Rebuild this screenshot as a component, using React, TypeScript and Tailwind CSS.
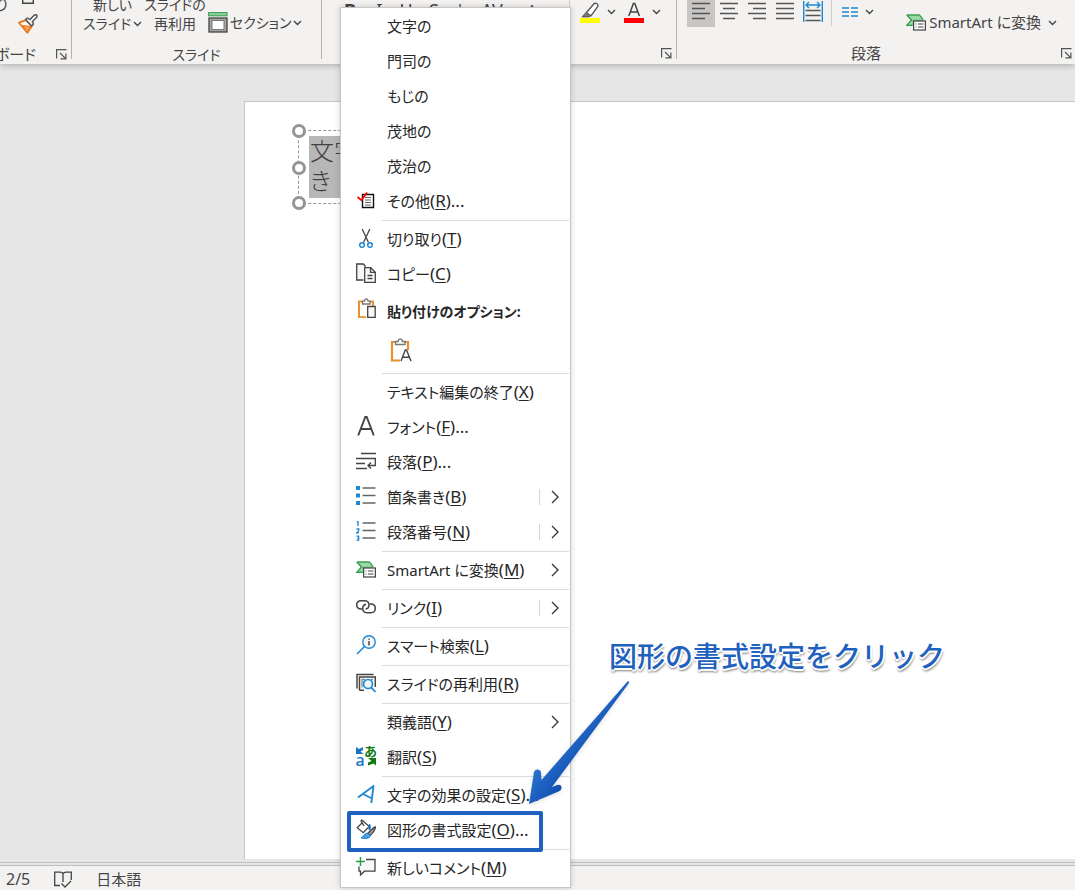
import React from 'react';

type IconProps = { className?: string };

function Chevron({ className = '' }: IconProps) {
  return (
    <svg viewBox="0 0 9 6" className={`h-[6px] w-[9px] shrink-0 ${className}`} fill="none" stroke="#444" strokeWidth="1.4">
      <path d="M1 1l3.5 3.5L8 1" />
    </svg>
  );
}

function Launcher() {
  return (
    <button aria-label="ダイアログを開く" className="shrink-0">
      <svg viewBox="0 0 11 11" className="h-[11px] w-[11px]" fill="none" stroke="#555" strokeWidth="1.2">
        <path d="M.6 9.5V.6h9.9M4 4l5 5M9.9 4.5v5.4H4.5" />
      </svg>
    </button>
  );
}

function SmartArtIcon() {
  return (
    <svg viewBox="0 0 20 17" className="h-[17px] w-5" fill="none">
      <path d="M.8 1h12.6l3.6 4.3v1H7.3v5H.8l4.8-5.2z" fill="#9fd8a8" stroke="#2e9e4a" strokeWidth=".8" />
      <path d="M.8 1h12.6L17 5.3M.8 1l4.8 5L.8 11.3h5.5" stroke="#2e9e4a" strokeWidth="1.2" />
      <rect x="7.6" y="7" width="11.8" height="9" fill="#fff" stroke="#444" strokeWidth="1.2" />
      <path d="M9.5 10h1M12 10h5.5M9.5 13h1M12 13h5.5" stroke="#444" />
    </svg>
  );
}

function BrushIcon() {
  return (
    <svg viewBox="0 0 20 20" className="h-5 w-5" fill="none">
      <path d="M1 8.7l7-2.6 5.8 6.1-4.500 6.600z" fill="#fff" stroke="#e8791a" strokeWidth="1.8" strokeLinejoin="round" />
      <path d="M4.500 11.500l8.500 1-3.600 5.800z" fill="#f4a05a" stroke="#e8791a" />
      <path d="M7.500 5.600l2-1.600 2.300 1.600L16.500 1c1.600-1 3.200.6 2.200 2.200l-4.400 4.600 1.200 2.200-1.800 2z" fill="#fff" stroke="#555" strokeWidth="1.500" strokeLinejoin="round" />
    </svg>
  );
}

function SectionIcon() {
  return (
    <svg viewBox="0 0 20 21" className="h-[21px] w-5 shrink-0" fill="none">
      <rect x=".6" y=".6" width="18.4" height="3.2" fill="#8fd19d" stroke="#2e9e4a" />
      <rect x="1" y="6" width="18" height="14" fill="#a6a6a6" stroke="#444" strokeWidth="1.3" />
      <rect x="4" y="8.5" width="12" height="9" fill="#fff" stroke="#777" />
    </svg>
  );
}

function HighlightIcon() {
  return (
    <svg viewBox="0 0 20 21" className="h-[21px] w-5" fill="none">
      <path d="M6.5 10.5L14 1.8c1.4-1.6 5 .6 3.6 2.8l-6.400 9-4.700-.6z" fill="#fff" stroke="#555" strokeWidth="1.4" />
      <path d="M6.2 10.3l5 3.4-2.6 1.2H2z" fill="#777" stroke="#555" />
      <rect y="16" width="20" height="5" fill="#ff0" />
    </svg>
  );
}

function FontColorIcon() {
  return (
    <svg viewBox="0 0 20 21" className="h-[21px] w-5" fill="none">
      <path d="M4.8 14L9.4 1.6h1.4L15.4 14M6.3 10h7.6" stroke="#444" strokeWidth="1.500" />
      <rect y="16" width="20" height="5" fill="#f00" />
    </svg>
  );
}

function AlignIcon({ d }: { d: string }) {
  return (
    <svg viewBox="0 0 18 18" className="h-[18px] w-[18px]" stroke="#555" strokeWidth="1.5">
      <path d={d} />
    </svg>
  );
}

const alignments = [
  { label: '左揃え', d: 'M0 1.5h18M0 6.5h13M0 11.5h18M0 16.5h13', active: true },
  { label: '中央揃え', d: 'M0 1.5h18M3 6.5h12M0 11.5h18M3 16.5h12', active: false },
  { label: '右揃え', d: 'M0 1.5h18M5 6.5h13M0 11.5h18M5 16.5h13', active: false },
  { label: '両端揃え', d: 'M0 1.5h18M0 6.5h18M0 11.5h18M0 16.5h18', active: false },
];

function MenuSvg({ children }: { children: React.ReactNode }) {
  return (
    <svg viewBox="0 0 20 20" className="h-5 w-5" fill="none" stroke="#444" strokeWidth="1.3">
      {children}
    </svg>
  );
}

const icons = {
  other: (
    <MenuSvg>
      <path d="M6.500 4.500h11v13h-11z" fill="#fff" stroke="#111" strokeWidth="1.400" />
      <path d="M9 7.500h6M9 10h6M9 12.500h6M9 15h6" stroke="#666" strokeWidth="1" />
      <path d="M1.500 7l4 3.200L11 2.500" stroke="#f00" strokeWidth="1.800" />
    </MenuSvg>
  ),
  cut: (
    <MenuSvg>
      <path d="M6.200 1l6.300 13.500M13.800 1L7.500 14.500" />
      <circle cx="6" cy="17" r="2.300" stroke="#1e88d2" strokeWidth="1.500" />
      <circle cx="14" cy="17" r="2.300" stroke="#1e88d2" strokeWidth="1.500" />
    </MenuSvg>
  ),
  copy: (
    <MenuSvg>
      <path d="M7.500 17H.7V1h6.500l2.500 2.500" fill="#f5f6f8" />
      <path d="M8.700 4.700h6l4.600 4.500v10.100H8.700z" fill="#f8f8f8" />
      <path d="M14.500 4.700v4.700h4.800M11.500 12.500h5M11.500 15.500h5" />
    </MenuSvg>
  ),
  paste: (
    <MenuSvg>
      <path d="M6.500 3.500H3v15.700h7M14 3.500h3V8" stroke="#e8912d" strokeWidth="2" />
      <path d="M6.500 6V3.200h2c0-3 3.500-3 3.500 0h2V6z" fill="#fff" stroke="#777" />
      <path d="M11.700 8.500h7.500v10.800h-7.500z" fill="#f8f8f8" />
    </MenuSvg>
  ),
  font: (
    <MenuSvg>
      <path d="M2.200 19.500L9.300 1h1.400l7.100 18.500M4.600 13h10.800" strokeWidth="1.900" />
    </MenuSvg>
  ),
  paragraph: (
    <MenuSvg>
      <path d="M5 2.500h15M0 7.500h20M0 12.500h9M0 17.500h11M19.300 8v6.500h-7M15 11.500l-3 3 3 3" strokeWidth="1.300" />
    </MenuSvg>
  ),
  bullets: (
    <MenuSvg>
      <path d="M0 0h4v4H0zM0 7.500h4v4H0zM0 15h4v4H0z" fill="#1e88d2" stroke="none" />
      <path d="M6.500 2h13M6.500 9.500h13M6.500 17h13" stroke="#666" strokeWidth="1.500" />
    </MenuSvg>
  ),
  numbers: (
    <MenuSvg>
      <path d="M.8 1.200L2 .5V5M.5 8h2.300v1.600L.6 11.800H3M.5 15.200h2.200v1.900H1.200h1.500v2H.5" stroke="#1e88d2" strokeWidth="1.300" />
      <path d="M6.500 2h13M6.500 9.500h13M6.500 17h13" stroke="#666" strokeWidth="1.500" />
    </MenuSvg>
  ),
  smartArt: <SmartArtIcon />,
  link: (
    <MenuSvg>
      <path d="M6 12H5C-.7 11.500-.7 4 5 3.700h3.500c5.800 0 5.800 7.600 1 8.300" strokeWidth="1.500" />
      <path d="M13.500 7h1.500c5.700.3 5.700 8.500 0 8.800h-4c-5.500-.3-5.500-7.500-1-8.500" strokeWidth="1.500" />
    </MenuSvg>
  ),
  search: (
    <MenuSvg>
      <circle cx="13" cy="7" r="6.200" fill="#f6f8fa" stroke="#1e88d2" strokeWidth="1.400" />
      <path d="M8.500 11.500L1 19" stroke="#1e88d2" strokeWidth="1.600" />
      <path d="M13 6v4.500M13 3.500v1.300" strokeWidth="1.500" />
    </MenuSvg>
  ),
  reuse: (
    <MenuSvg>
      <path d="M1 15.500V1.500h16.500M3.500 17.500V4h15.800v10M3.500 17.300H8" strokeWidth="1.500" />
      <path d="M6 14.500V6.500h3M15 6.500h2" stroke="#888" />
      <circle cx="12" cy="11" r="4.500" fill="#eef6fc" stroke="#1e88d2" strokeWidth="1.700" />
      <path d="M15 14.300l4.500 4.700" stroke="#1e88d2" strokeWidth="1.800" />
    </MenuSvg>
  ),
  translate: (
    <svg viewBox="0 0 20 20" className="h-5 w-5 overflow-visible" fontFamily="'Noto Sans','Noto Sans CJK JP',sans-serif" fontWeight="700">
      <text x="-.5" y="19.500" fontSize="16" fontWeight="500" fill="#1673c8">a</text>
      <text x="8" y="10" fontSize="13" fill="#107c10">あ</text>
      <path d="M0 1l3 2 4-2v3L4.500 5.500 7.500 8H0z" fill="#1673c8" />
      <path d="M12 12h8v7.500l-2.500-2-5.500 2v-3l3.500-1.500z" fill="#107c10" />
    </svg>
  ),
  textEffect: (
    <MenuSvg>
      <path d="M2 13.500L17.500 2 15.300 19M7 10l9 4.500" stroke="#1e88d2" strokeWidth="1.900" strokeLinejoin="round" />
    </MenuSvg>
  ),
  shapeFormat: (
    <MenuSvg>
      <path d="M6 4L1.200 8.700l6 5 6-6.200L6.500 1.500C5 .5 4.500 2 6 3.500l2 3.500" fill="#fff" />
      <path d="M19.500 8c-2 .5-6 4-7.500 6.500l2 2c2.500-2 5-5.500 5.500-8.500z" fill="#999" />
      <path d="M11.800 14l2.700 2.700c-1 3-5 3-9.500 2.300 2.500-.5 3-5 6.800-5z" fill="#4ba3e3" stroke="#1673c8" strokeWidth="1" />
      <path d="M13 5.500c1.500 1 1 3 .3 5.500" stroke="#1673c8" strokeWidth="2" />
    </MenuSvg>
  ),
  comment: (
    <MenuSvg>
      <path d="M10 2.500h9v11.700H8.500L4.500 18v-3.800H3V9.500" fill="#f8f8f8" />
      <path d="M4.500 0v9M0 4.500h9" stroke="#22a045" strokeWidth="1.500" />
    </MenuSvg>
  ),
};

type Entry =
  | { kind: 'item'; text: string; keyChar?: string; tail?: string; icon?: keyof typeof icons; sub?: boolean; split?: boolean; marked?: boolean }
  | { kind: 'separator' }
  | { kind: 'paste' };

const entries: Entry[] = [
  { kind: 'item', text: '文字の' },
  { kind: 'item', text: '門司の' },
  { kind: 'item', text: 'もじの' },
  { kind: 'item', text: '茂地の' },
  { kind: 'item', text: '茂治の' },
  { kind: 'item', text: 'その他', keyChar: 'R', tail: '...', icon: 'other' },
  { kind: 'separator' },
  { kind: 'item', text: '切り取り', keyChar: 'T', icon: 'cut' },
  { kind: 'item', text: 'コピー', keyChar: 'C', icon: 'copy' },
  { kind: 'paste' },
  { kind: 'separator' },
  { kind: 'item', text: 'テキスト編集の終了', keyChar: 'X' },
  { kind: 'item', text: 'フォント', keyChar: 'F', tail: '...', icon: 'font' },
  { kind: 'item', text: '段落', keyChar: 'P', tail: '...', icon: 'paragraph' },
  { kind: 'item', text: '箇条書き', keyChar: 'B', icon: 'bullets', sub: true, split: true },
  { kind: 'item', text: '段落番号', keyChar: 'N', icon: 'numbers', sub: true, split: true },
  { kind: 'separator' },
  { kind: 'item', text: 'SmartArt に変換', keyChar: 'M', icon: 'smartArt', sub: true },
  { kind: 'separator' },
  { kind: 'item', text: 'リンク', keyChar: 'I', icon: 'link', sub: true, split: true },
  { kind: 'separator' },
  { kind: 'item', text: 'スマート検索', keyChar: 'L', icon: 'search' },
  { kind: 'separator' },
  { kind: 'item', text: 'スライドの再利用', keyChar: 'R', icon: 'reuse' },
  { kind: 'separator' },
  { kind: 'item', text: '類義語', keyChar: 'Y', sub: true },
  { kind: 'item', text: '翻訳', keyChar: 'S', icon: 'translate' },
  { kind: 'separator' },
  { kind: 'item', text: '文字の効果の設定', keyChar: 'S', tail: '...', icon: 'textEffect' },
  { kind: 'item', text: '図形の書式設定', keyChar: 'O', tail: '...', icon: 'shapeFormat', marked: true },
  { kind: 'separator' },
  { kind: 'item', text: '新しいコメント', keyChar: 'M', icon: 'comment' },
];

function PasteOptions() {
  return (
    <div>
      <div className="flex h-10 items-center gap-[11px] pl-[15px] text-sm leading-5 font-bold">
        <span className="w-5 shrink-0 pb-2">{icons.paste}</span>
        <span>貼り付けのオプション:</span>
      </div>
      <div className="flex h-10 items-center pb-1 pl-[48px]">
        <button role="menuitem" aria-label="テキストのみ保持">
          <svg viewBox="0 0 24 26" className="h-[26px] w-6" fill="none">
            <path d="M6.500 5H3v18.500h8M15 5h4v8" stroke="#e8912d" strokeWidth="2.200" />
            <path d="M6.500 7.500V4.500h2.800c0-3.500 4-3.500 4 0h2.700v3z" fill="#fff" stroke="#777" strokeWidth="1.300" />
            <path d="M12 24l4.300-11h1.200L22 24M13.300 20.300h7.300" stroke="#444" strokeWidth="1.400" />
          </svg>
        </button>
      </div>
    </div>
  );
}

function ContextMenu() {
  return (
    <div
      role="menu"
      className="absolute left-[340px] top-[7px] w-[231px] border border-[#c6c6c6] bg-white py-px text-[15px] leading-5 text-[#262626] shadow-[0_0_6px_rgba(0,0,0,0.18)]"
    >
      {entries.map((e, i) => {
        if (e.kind === 'separator') return <div key={i} role="separator" className="my-px ml-[41px] mr-px h-px bg-[#dcdcdc]" />;
        if (e.kind === 'paste') return <PasteOptions key={i} />;
        return (
          <button key={i} role="menuitem" className="relative flex h-[35px] w-full items-center gap-[11px] whitespace-nowrap pb-0.5 pl-[15px] pr-[11px] text-left">
            <span className="w-5 shrink-0 pb-px">{e.icon && icons[e.icon]}</span>
            <span className="flex-1">
              {e.text}
              {e.keyChar && (
                <span className="text-[17px] leading-5">
                  (<span className="underline underline-offset-2">{e.keyChar}</span>){e.tail}
                </span>
              )}
            </span>
            {e.split && <span className="h-4 w-px shrink-0 bg-[#d4d4d4]" />}
            {e.sub && (
              <svg viewBox="0 0 8 14" className="h-3.5 w-2 shrink-0" fill="none" stroke="#333" strokeWidth="1.300">
                <path d="M1 1l6 6-6 6" />
              </svg>
            )}
            {e.marked && <span className="absolute -bottom-[4px] -top-[2px] left-[6px] right-[27px] rounded-xs border-4 border-[#1f61be]" />}
          </button>
        );
      })}
    </div>
  );
}

function GroupDivider() {
  return <div className="h-[59px] w-px shrink-0 bg-[#b5b3b1]" />;
}

function Ribbon() {
  return (
    <header className="relative flex h-16 shrink-0 overflow-hidden bg-[#f3f2f1] text-[15px] leading-[19px] text-[#444] shadow-[0_1px_7px_rgba(0,0,0,0.28)]">
      <section className="flex w-[71px] shrink-0 flex-col justify-end overflow-hidden">
        <div className="flex items-end gap-2.5 pb-[11px]">
          <button className="flex w-2 justify-end whitespace-nowrap pb-5">
            <span>貼り</span>
          </button>
          <div className="flex flex-col items-center gap-2.5">
            <button aria-label="コピー">
              <svg viewBox="0 0 12 12" className="h-3 w-3" fill="none" stroke="#444" strokeWidth="1.4">
                <path d="M.7.7h10.600v10.600H.7z" />
              </svg>
            </button>
            <button aria-label="書式のコピー/貼り付け"><BrushIcon /></button>
          </div>
        </div>
        <div className="flex h-[21px] items-center justify-end gap-5 whitespace-nowrap pr-1">
          <span>クリップボード</span>
          <Launcher />
        </div>
      </section>
      <GroupDivider />
      <section className="flex w-[249px] shrink-0 flex-col justify-end">
        <div className="flex items-end gap-0.5 whitespace-nowrap pb-3 pl-[11px] text-sm leading-[19px]">
          <button className="flex flex-col items-center">
            <span>新しい</span>
            <span className="flex items-center gap-0.5">スライド<Chevron /></span>
          </button>
          <button className="flex flex-col items-center">
            <span>スライドの</span>
            <span>再利用</span>
          </button>
          <button className="flex items-center gap-0.5">
            <SectionIcon />
            <span>セクション</span>
            <Chevron />
          </button>
        </div>
        <div className="flex h-[21px] items-center justify-center text-sm leading-[19px]">スライド</div>
      </section>
      <GroupDivider />
      <section className="flex w-[354px] shrink-0 flex-col">
        <div className="flex h-[43px] pl-[14px] text-lg leading-5">
          <div className="flex h-5 items-center">
            <button className="w-7 font-bold">B</button>
            <button className="w-7 italic">I</button>
            <button className="w-7 underline">U</button>
            <button className="w-7">S</button>
            <button className="w-7 text-sm line-through">abc</button>
            <button className="w-8">AV</button>
            <button className="w-14 text-sm">Aa</button>
          </div>
          <div className="ml-auto mr-[15px] flex h-6 items-center gap-2 border-l border-[#d0cecc] pl-2.5">
            <button aria-label="蛍光ペンの色" className="flex items-center gap-[7px]"><HighlightIcon /><Chevron /></button>
            <button aria-label="フォントの色" className="flex items-center gap-2"><FontColorIcon /><Chevron /></button>
          </div>
        </div>
        <div className="flex h-[21px] items-center justify-end pr-1"><Launcher /></div>
      </section>
      <GroupDivider />
      <section className="flex min-w-0 flex-1 flex-col">
        <div className="flex h-[43px] items-start pl-2.5 pr-[18px]">
          <div className="flex h-[27px] shrink-0">
            {alignments.map((a) => (
              <button key={a.label} aria-label={a.label} className={`flex w-7 justify-center pt-0.5 ${a.active ? 'bg-[#c8c6c4]' : ''}`}>
                <AlignIcon d={a.d} />
              </button>
            ))}
            <button aria-label="均等割り付け" className="flex w-7 justify-center pt-px">
              <svg viewBox="0 0 20 21" className="h-[21px] w-5" fill="none">
                <path d="M.7 0v21M19.300 0v21M3 4h14M6 1L3 4l3 3M14 1l3 3-3 3" stroke="#1e88d2" strokeWidth="1.400" />
                <path d="M2.500 9.500h15M2.500 14.500h15M2.500 19.500h15" stroke="#555" strokeWidth="1.500" />
              </svg>
            </button>
          </div>
          <div className="ml-1 h-[26px] w-px shrink-0 bg-[#d0cecc]" />
          <button aria-label="段の追加または削除" className="ml-2.5 flex h-6 items-center gap-[7px]">
            <svg viewBox="0 0 16 10" className="h-2.5 w-4" stroke="#1e88d2" strokeWidth="1.500">
              <path d="M0 1h7M9 1h7M0 5h7M9 5h7M0 9h7M9 9h7" />
            </svg>
            <Chevron />
          </button>
          <button className="ml-auto mt-3 flex h-[21px] shrink-0 items-center gap-[3px] whitespace-nowrap">
            <SmartArtIcon />
            <span className="pr-1">SmartArt に変換</span>
            <Chevron />
          </button>
        </div>
        <div className="flex h-[21px] items-center pr-[3px]">
          <span className="flex-1 pr-1.5 text-center">段落</span>
          <Launcher />
        </div>
      </section>
    </header>
  );
}

function Handle({ place }: { place: string }) {
  return <span className={`absolute -left-[7px] h-3.5 w-3.5 rounded-full border-3 border-[#959595] bg-white ${place}`} />;
}

function Slide() {
  return (
    <main className="flex flex-1 bg-[#e6e6e6] pb-[3px] pl-[244px] pt-[37px]">
      <div className="flex-1 border-l border-t border-[#c6c6c6] bg-white pl-[53px] pt-7">
        <div className="relative w-[220px] border border-dashed border-[#959595] py-[5px] pl-2.5">
          <p className="w-[120px] bg-[#b7b7b7] pb-0.5 pl-px text-2xl leading-[30px] font-light text-[#404040]">
            文字
            <br />き
          </p>
          <Handle place="-top-[7px]" />
          <Handle place="top-[30px]" />
          <Handle place="-bottom-[7px]" />
        </div>
      </div>
    </main>
  );
}

function StatusBar() {
  return (
    <footer className="shrink-0 border-t border-[#c0c0c0] bg-[#e6e6e6] pt-[2px] text-[15px] leading-5 text-[#444]">
      <div className="flex h-[25px] items-center gap-6 border-t border-[#c0c0c0] bg-[#f3f2f1] pl-[6px] pt-[2px]">
        <span className="text-base leading-5">2/5</span>
        <button aria-label="スペルチェック">
          <svg viewBox="0 0 18 17" className="h-[17px] w-[18px]" fill="none" stroke="#444" strokeWidth="1.300">
            <path d="M6 14.500H.7V1.200h5c2 0 3.300.8 3.300 2 0-1.200 1.300-2 3.300-2h5V9M9 3.200V11M7.500 12.500l3.500 3.500 6-6" />
          </svg>
        </button>
        <span>日本語</span>
      </div>
    </footer>
  );
}

function Callout() {
  return (
    <>
      <p className="absolute left-[609px] top-[636px] whitespace-nowrap text-[28px] font-medium leading-10 text-[#1f61be] [font-feature-settings:normal] [text-shadow:-2px_0_#fff,2px_0_#fff,0_-2px_#fff,0_2px_#fff,1px_1px_#fff,0_3px_2px_#999,2px_3px_2px_#bbb]">
        図形の書式設定をクリック
      </p>
      <svg viewBox="0 0 104 126" className="absolute left-[527px] top-[680px] h-[126px] w-[104px] drop-shadow-sm">
        <defs>
          <linearGradient id="shaft" x1="0" y1="0" x2="1" y2="1">
            <stop offset=".4" stopColor="#2a6fce" />
            <stop offset=".6" stopColor="#0f50b0" />
          </linearGradient>
        </defs>
        <path d="M101 1Q102 1 102 3L25 107l5-2q4-1 4.500 2 .5 3-3 4.500L2 124 7 92q1-3 4-2.500 3 .5 3 3.500l.5 7z" fill="url(#shaft)" />
      </svg>
    </>
  );
}

export default function App() {
  return (
    <div className="relative flex min-h-screen flex-col overflow-hidden bg-[#e6e6e6] font-['Noto_Sans','Noto_Sans_CJK_JP',sans-serif] [font-feature-settings:'palt']">
      <Ribbon />
      <Slide />
      <StatusBar />
      <ContextMenu />
      <Callout />
    </div>
  );
}
